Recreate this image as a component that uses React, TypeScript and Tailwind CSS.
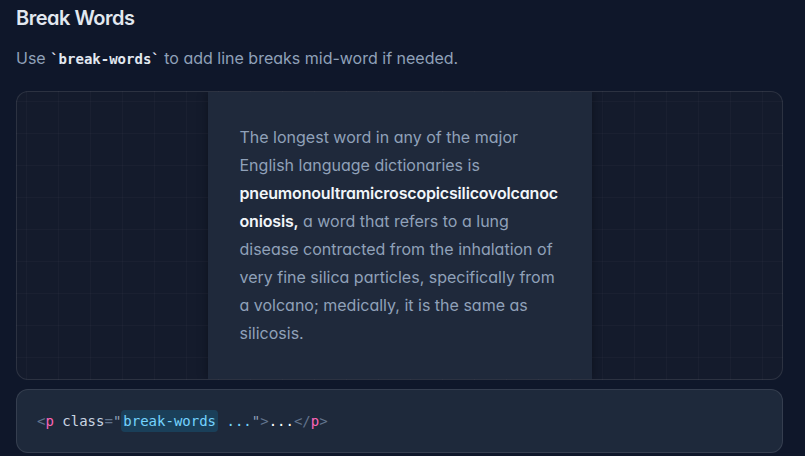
export default function App() {
  return (
    <div className="min-h-screen bg-[#0f172a] pl-4 pr-[22px] pt-[4px] font-['Inter',sans-serif] [font-feature-settings:'cv11']">
      {/* Header */}
      <h2 className="text-xl font-semibold leading-7 tracking-tight text-slate-200">Break Words</h2>
      <p className="mt-[12px] text-base leading-7 text-slate-400">
        Use{' '}
        <code className="font-['DejaVu_Sans_Mono',monospace] text-sm font-bold text-slate-200">`break-words`</code>{' '}
        to add line breaks mid-word if needed.
      </p>

      {/* Demo */}
      <div className="mt-[19px] overflow-hidden rounded-xl border border-white/10 bg-[#141b2c] bg-[linear-gradient(to_right,rgba(255,255,255,0.022)_1px,transparent_1px),linear-gradient(to_bottom,rgba(255,255,255,0.022)_1px,transparent_1px)] bg-[size:32px_32px] bg-[position:9px_9px]">
        <div className="mx-auto max-w-sm bg-[#1f293b] px-8 pt-[31px] pb-[32px] text-base leading-7 text-slate-400 shadow-[0_0_10px_rgba(0,0,0,0.35)] break-words">
          The longest word in any of the major English language dictionaries is{' '}
          <span className="font-semibold tracking-[-0.17px] text-slate-100">pneumonoultramicroscopicsilicovolcanoconiosis,</span> a word
          that refers to a lung disease contracted from the inhalation of very fine silica particles, specifically from
          a volcano; medically, it is the same as silicosis.
        </div>
      </div>

      {/* Code */}
      <div className="mt-[9px] rounded-xl border border-white/10 bg-[#1e293b] px-5 py-[19px] font-['DejaVu_Sans_Mono',monospace] text-sm leading-6 text-slate-300">
        <span className="text-slate-500">&lt;</span>
        <span className="text-pink-400">p</span> class
        <span className="text-slate-500">=</span>
        <span className="text-slate-400">"</span>
        <span className="rounded bg-sky-400/15 px-[2px] py-[3px] text-sky-300">break-words</span>
        <span className="text-sky-300"> ...</span>
        <span className="text-slate-400">"</span>
        <span className="text-slate-500">&gt;</span>
        <span className="text-white">...</span>
        <span className="text-slate-500">&lt;/</span>
        <span className="text-pink-400">p</span>
        <span className="text-slate-500">&gt;</span>
      </div>
    </div>
  );
}
